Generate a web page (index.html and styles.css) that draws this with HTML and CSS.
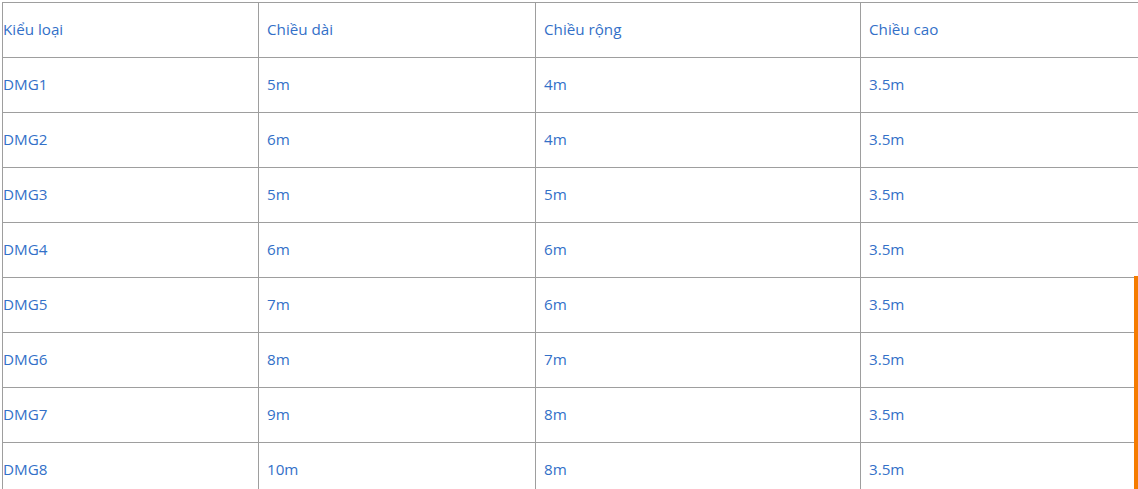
FILE: index.html
```html
<!DOCTYPE html>
<html lang="vi">
<head>
<meta charset="utf-8">
<title>Kích thước</title>
<link rel="stylesheet" href="styles.css">
</head>
<body>
<div class="wrap">
  <table class="spec">
    <colgroup>
      <col class="c1"><col class="c2"><col class="c3"><col class="c4">
    </colgroup>
    <tbody>
      <tr><td>Kiểu loại</td><td>Chiều dài</td><td>Chiều rộng</td><td>Chiều cao</td></tr>
      <tr><td>DMG1</td><td>5m</td><td>4m</td><td>3.5m</td></tr>
      <tr><td>DMG2</td><td>6m</td><td>4m</td><td>3.5m</td></tr>
      <tr><td>DMG3</td><td>5m</td><td>5m</td><td>3.5m</td></tr>
      <tr><td>DMG4</td><td>6m</td><td>6m</td><td>3.5m</td></tr>
      <tr><td>DMG5</td><td>7m</td><td>6m</td><td>3.5m</td></tr>
      <tr><td>DMG6</td><td>8m</td><td>7m</td><td>3.5m</td></tr>
      <tr><td>DMG7</td><td>9m</td><td>8m</td><td>3.5m</td></tr>
      <tr><td>DMG8</td><td>10m</td><td>8m</td><td>3.5m</td></tr>
    </tbody>
  </table>
</div>
<div class="side-bar"></div>
</body>
</html>
```
FILE: styles.css
```css
html, body {
  margin: 0;
  padding: 0;
  background: #fff;
  overflow: hidden;
}
.wrap {
  width: 1138px;
  height: 489px;
  overflow: hidden;
  padding: 2px 0 0 2px;
  box-sizing: border-box;
}
.spec {
  border-collapse: collapse;
  table-layout: fixed;
  width: 1200px;
  font-family: "Open Sans", "Noto Sans", sans-serif;
  font-size: 15.2px;
  color: #3370c8;
}
.c1 { width: 256px; }
.c2 { width: 277px; }
.c3 { width: 325px; }
.c4 { width: 342px; }
.spec td {
  border: 1px solid #9e9e9e;
  height: 55px;
  padding: 0 0 3px 8px;
  box-sizing: border-box;
  vertical-align: middle;
  white-space: nowrap;
}
.spec td:first-child {
  padding-left: 0;
}
.side-bar {
  position: fixed;
  right: 0;
  top: 276px;
  bottom: 0;
  width: 4px;
  background: #f57c00;
}
```
